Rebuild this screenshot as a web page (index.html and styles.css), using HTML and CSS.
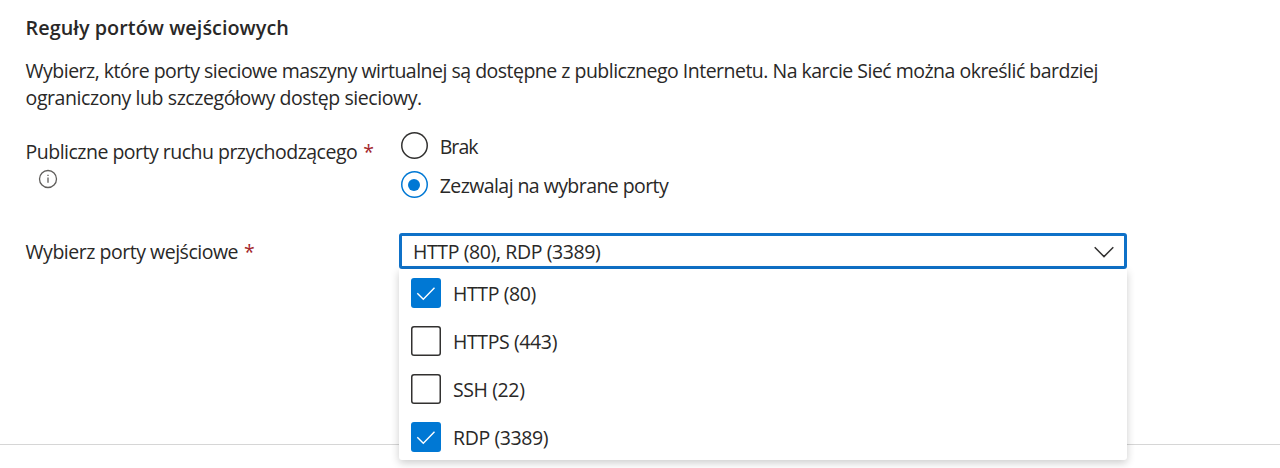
FILE: index.html
```html
<!DOCTYPE html>
<html lang="pl">
<head>
<meta charset="utf-8">
<title>Reguły portów wejściowych</title>
<link rel="stylesheet" href="styles.css">
</head>
<body>
<main class="page">
  <section class="rules">
    <h2 class="title">Reguły portów wejściowych</h2>
    <p class="intro">Wybierz, które porty sieciowe maszyny wirtualnej są dostępne z publicznego Internetu. Na karcie Sieć można określić bardziej<br><span class="intro-end">ograniczony lub szczegółowy dostęp sieciowy.</span></p>
    <div class="field field-public">
      <div class="label">Publiczne porty ruchu przychodzącego<span class="req">*</span>
        <svg class="info" viewBox="0 0 20 20"><circle cx="10" cy="10" r="8.5"/><path d="M10 8.6v5.2M10 5.8v1.3"/></svg>
      </div>
      <div class="radios">
        <div class="radio"><i class="dot"></i><span class="short">Brak</span></div>
        <div class="radio"><i class="dot on"></i><span>Zezwalaj na wybrane porty</span></div>
      </div>
    </div>
    <div class="field field-ports">
      <div class="label">Wybierz porty wejściowe<span class="req">*</span></div>
      <div class="combo">
        <div class="select"><span class="value">HTTP (80), RDP (3389)</span>
          <svg class="chevron" viewBox="0 0 20 12"><path d="M.7 1.2 10 10.6l9.3-9.4"/></svg>
        </div>
        <div class="menu">
          <div class="option"><i class="box checked"><svg viewBox="0 0 30 30"><path d="M6.3 15.2l6 6L23.5 9.8"/></svg></i><span>HTTP (80)</span></div>
          <div class="option"><i class="box"></i><span>HTTPS (443)</span></div>
          <div class="option"><i class="box"></i><span>SSH (22)</span></div>
          <div class="option"><i class="box checked"><svg viewBox="0 0 30 30"><path d="M6.3 15.2l6 6L23.5 9.8"/></svg></i><span>RDP (3389)</span></div>
        </div>
      </div>
    </div>
  </section>
  <footer class="footer"></footer>
</main>
</body>
</html>
```
FILE: styles.css
```css
* { box-sizing: border-box; }
body {
  margin: 0;
  background: #fff;
  color: #292827;
  font: 19.5px/27px "Open Sans", "Noto Sans", sans-serif;
  letter-spacing: -0.51px;
  white-space: nowrap;
  overflow: hidden;
}
.page { height: 468px; display: flex; flex-direction: column; }
.rules { height: 444px; padding: 14px 0 0 25.6px; }
.title { margin: 0; font-size: 19.8px; font-weight: 650; line-height: 27px; letter-spacing: 0.05px; }
.intro { margin: 16px 0 0; }
.intro-end { letter-spacing: -0.42px; }
.field { display: grid; grid-template-columns: 373.4px 728px; }
.field-public { margin-top: 20px; height: 102px; }
.field-ports { height: 36px; }
.field-public .label { padding-top: 7px; }
.field-ports .label { padding-top: 5px; letter-spacing: -0.48px; }
.req { color: #a4262c; margin-left: 6px; }
.info { display: block; width: 20px; height: 20px; margin: 4px 0 0 12.4px; fill: none; stroke: #605e5c; stroke-width: 1.3; }
.radios { padding: 1px 0 0 1.7px; display: flex; flex-direction: column; gap: 12px; letter-spacing: -0.57px; }
.radio { display: flex; gap: 12px; height: 27px; }
.radio span { padding-top: 1px; }
.radio .short { letter-spacing: -0.9px; }
.dot { width: 27px; height: 27px; box-shadow: inset 0 0 0 1.5px #323130; border-radius: 50%; display: grid; place-items: center; }
.dot.on { box-shadow: inset 0 0 0 1.5px #0078d4; }
.dot.on::after { content: ""; width: 12px; height: 12px; border-radius: 50%; background: #0078d4; }
.combo { position: relative; letter-spacing: -0.39px; }
.select { height: 36px; border: 3px solid #0f71c8; border-radius: 3px; padding: 0 10px 0 11px; display: flex; align-items: center; justify-content: space-between; }
.chevron { width: 20px; height: 12px; margin-top: 1px; fill: none; stroke: #323130; stroke-width: 1.5; }
.menu { position: absolute; top: 36px; left: 0; width: 728px; height: 191px; background: #fff; border-radius: 0 0 3px 3px; padding: 9px 12px 0; display: flex; flex-direction: column; gap: 18px; box-shadow: 0 3px 8px rgba(0,0,0,.2); }
.option { display: flex; gap: 12px; height: 30px; align-items: center; }
.box { width: 30px; height: 30px; box-shadow: inset 0 0 0 1.5px #323130; border-radius: 3px; }
.box.checked { box-shadow: none; background: #0078d4; }
.box svg { display: block; width: 30px; height: 30px; fill: none; stroke: #fff; stroke-width: 1.4; }
.footer { border-top: 1px solid #d6d6d6; height: 24px; }
```
